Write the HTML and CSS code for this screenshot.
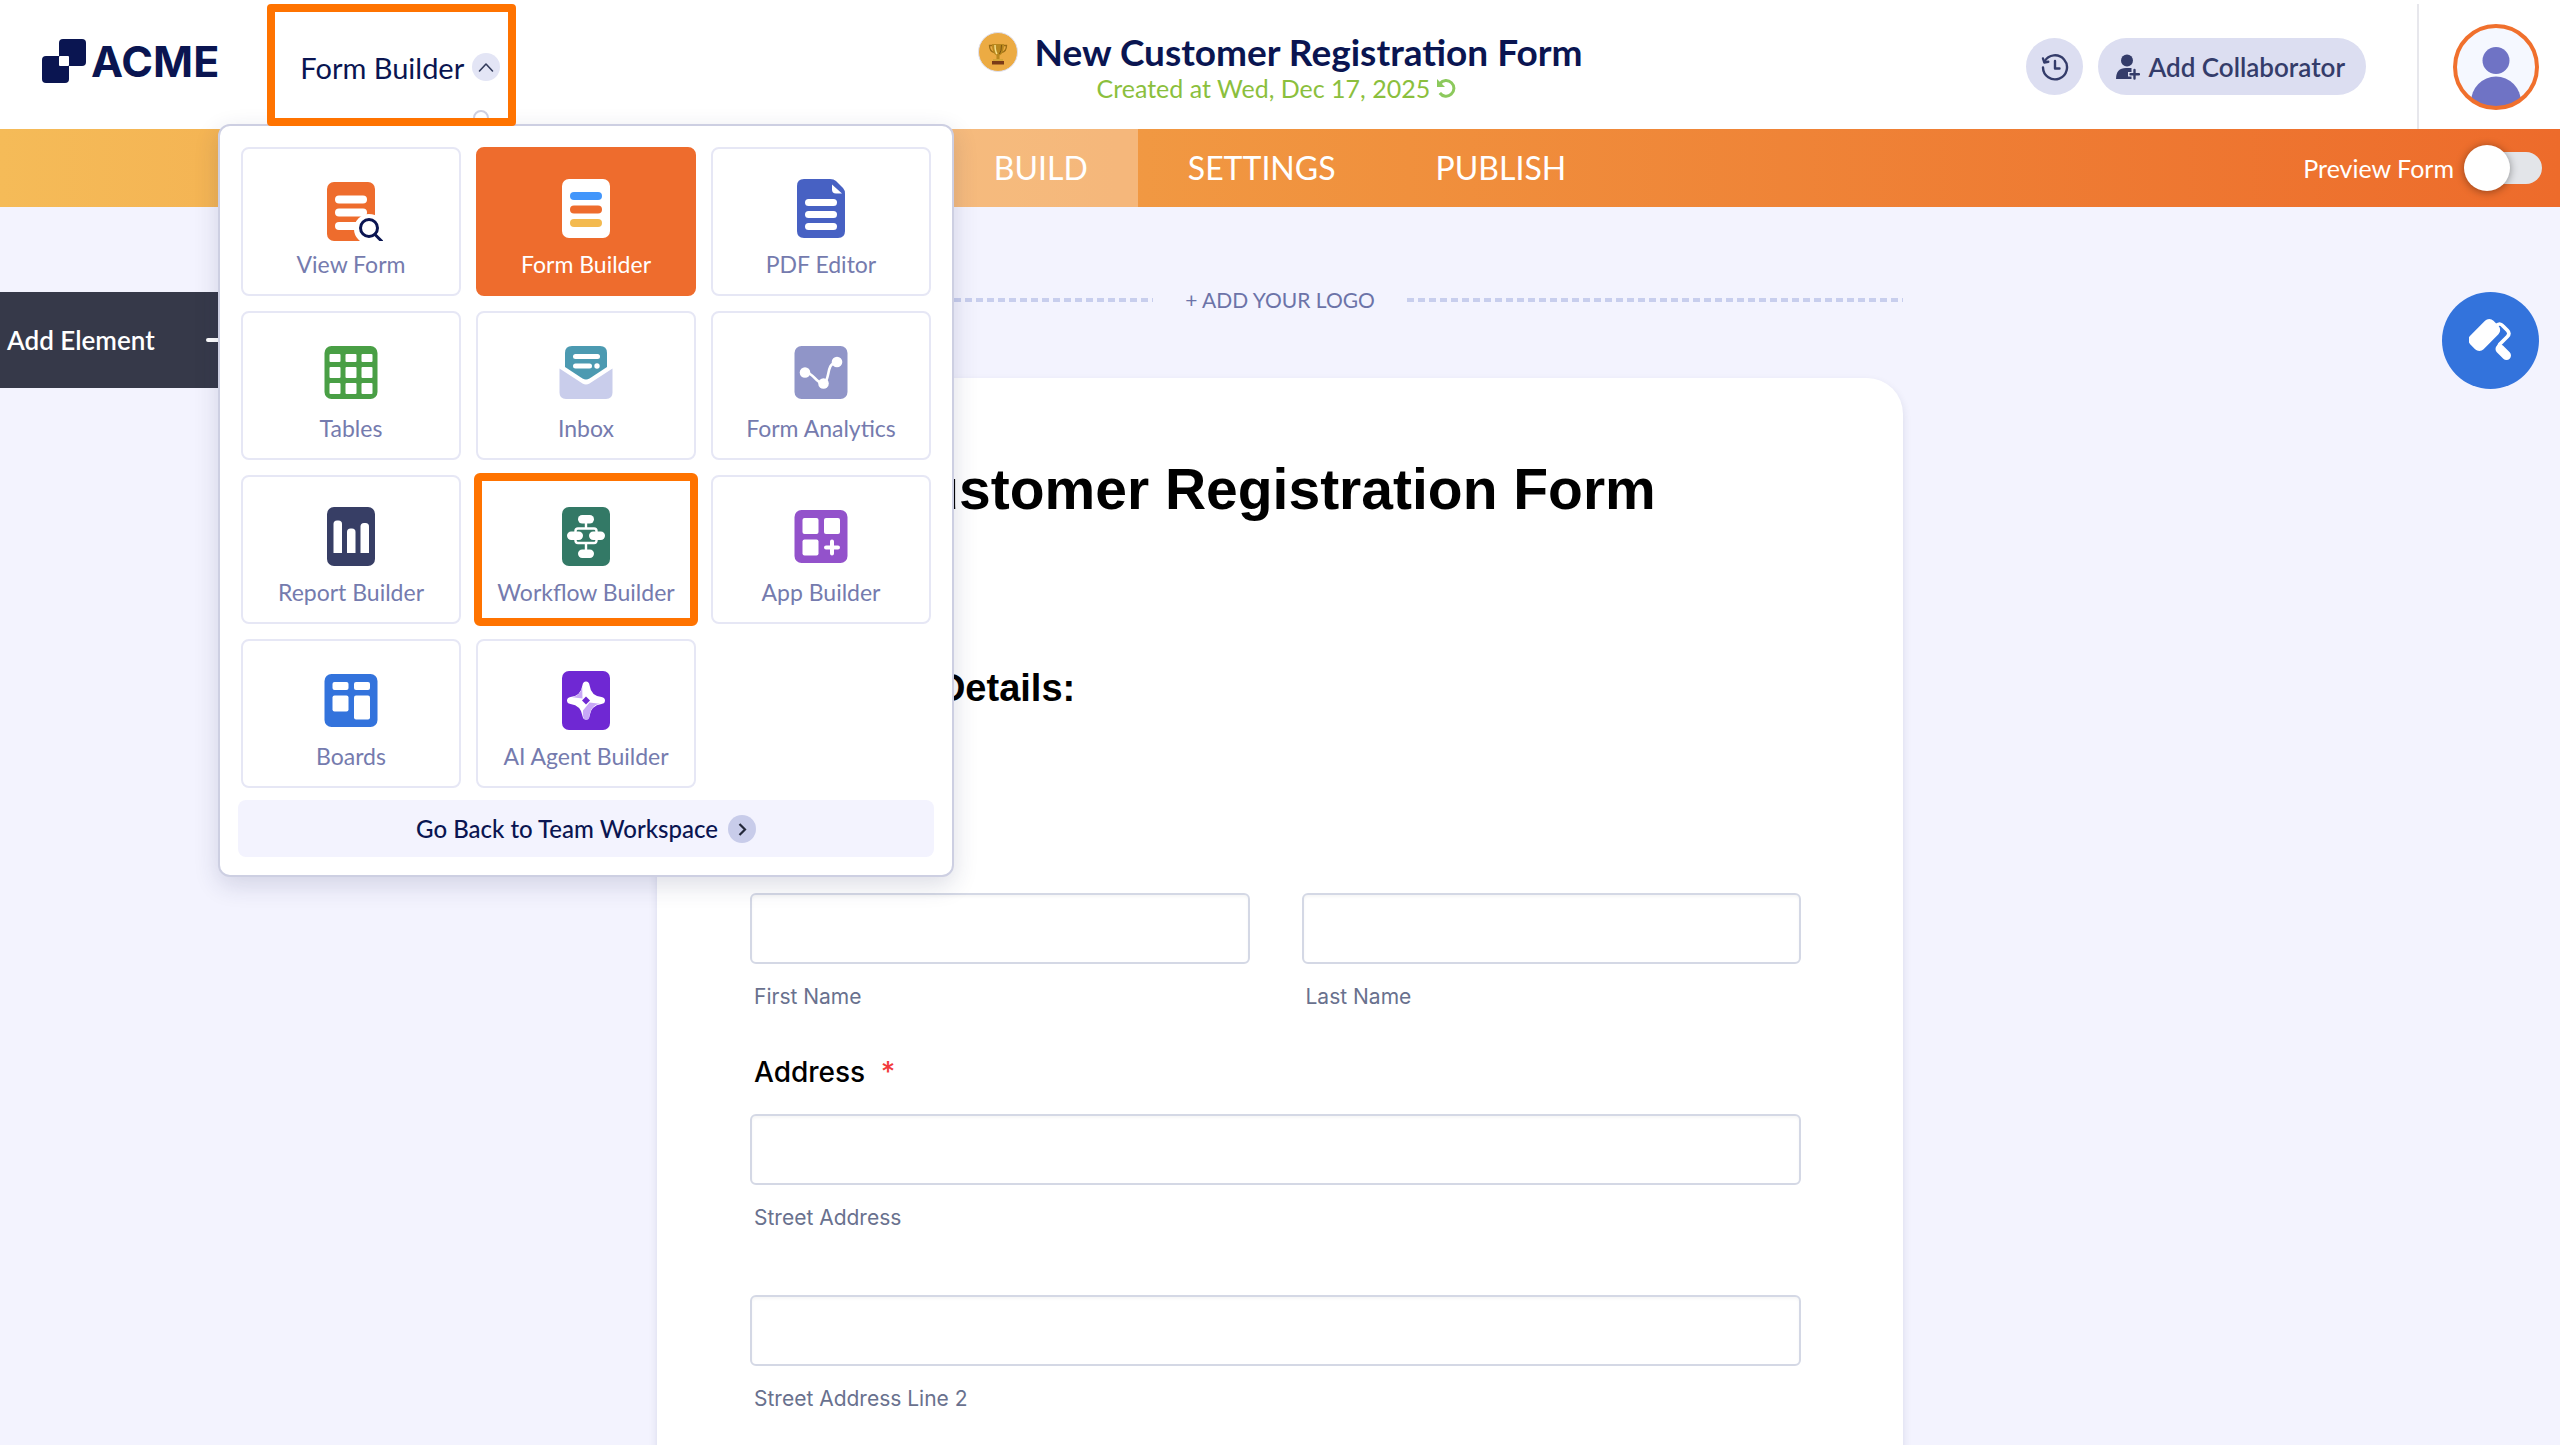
FILE: index.html
```html
<!DOCTYPE html>
<html lang="en">
<head>
<meta charset="UTF-8">
<meta name="viewport" content="width=device-width, initial-scale=1.0">
<title>New Customer Registration Form - Form Builder</title>
<link rel="stylesheet" href="styles.css">
</head>
<body>

  <header class="header">
    <div class="header-left">
      <a href="#" class="logo">
        <svg width="44" height="44" viewBox="0 0 44 44" aria-hidden="true">
          <rect x="17" y="0" width="27" height="27" rx="4" fill="#0a1551"/>
          <rect x="0" y="17" width="27" height="27" rx="4" fill="#0a1551"/>
          <rect x="17" y="17" width="10" height="10" rx="1" fill="#fff"/>
        </svg>
        <span>ACME</span>
      </a>
      <button type="button" class="app-switch">
        Form Builder
        <svg width="28" height="28" viewBox="0 0 28 28" aria-hidden="true">
          <circle cx="14" cy="14" r="14" fill="#e3e5f5"/>
          <path d="M7.500 18L14 11L20.500 18" fill="none" stroke="#343c5c" stroke-width="1.600" stroke-linecap="round" stroke-linejoin="round"/>
        </svg>
      </button>
    </div>

    <div class="form-info">
      <svg class="trophy" width="40" height="40" viewBox="0 0 40 40" aria-hidden="true">
        <circle cx="20" cy="20" r="19.500" fill="#ecab43" stroke="#dfe0ef"/>
        <path d="M14 13.500h-2.500q0 6 5 7M26 13.500h2.500q0 6-5 7" fill="none" stroke="#9a6c14" stroke-width="1.300"/>
        <path d="M14 12h12q0 9.500-4.500 11.500v3.500h-3v-3.500q-4.500-2-4.500-11.500z" fill="#b8871d"/>
        <path d="M17 13q0 6 2 9" fill="none" stroke="#f7e08a" stroke-width="1.500"/>
        <path d="M23.500 13q0 6-2 9" fill="none" stroke="#7d5510" stroke-width="1"/>
        <rect x="15" y="27" width="10" height="2" fill="#d4a537"/>
        <rect x="14" y="29" width="12" height="3.500" fill="#7a3a17"/>
      </svg>
      <div class="form-title">
        <h1>New Customer Registration Form</h1>
        <p>
          Created at Wed, Dec 17, 2025
          <svg width="20" height="20" viewBox="0 0 20 20" aria-hidden="true">
            <path d="M4 5.500A7.800 7.800 0 1 1 3.800 15" fill="none" stroke="#8cc95c" stroke-width="3"/>
            <path d="M1 1v8h8z" fill="#8cc95c"/>
          </svg>
        </p>
      </div>
    </div>

    <div class="header-right">
      <button type="button" class="history" aria-label="Revision history">
        <svg width="28" height="28" viewBox="0 0 28 28" fill="none" stroke="#343c6a" stroke-width="2.400" stroke-linecap="round" stroke-linejoin="round" aria-hidden="true">
          <path d="M3.500 8.500A12 12 0 1 1 2 14.500"/>
          <path d="M2 5.500l1.300 4 4-.7"/>
          <path d="M14 8v7.500h4.500"/>
        </svg>
      </button>
      <button type="button" class="collab">
        <svg width="24" height="26" viewBox="0 0 24 26" aria-hidden="true">
          <circle cx="11" cy="6.500" r="6" fill="#343c6a"/>
          <path d="M0 25q0-11 10-11h5.500v4h-3.500v4.500h3.500v2.500z" fill="#343c6a"/>
          <path d="M18.500 16v8.500M14.500 20.200h8.500" stroke="#343c6a" stroke-width="2.400" stroke-linecap="round"/>
        </svg>
        Add Collaborator
      </button>
      <a href="#" class="account" aria-label="My account">
        <svg width="86" height="86" viewBox="0 0 86 86" aria-hidden="true">
          <defs><clipPath id="avatar"><circle cx="43" cy="43" r="40"/></clipPath></defs>
          <circle cx="43" cy="43" r="41" fill="#f5f8ff"/>
          <g fill="#6f73c5" clip-path="url(#avatar)">
            <circle cx="43" cy="36.500" r="13.500"/>
            <ellipse cx="43" cy="78" rx="25" ry="25.500"/>
          </g>
          <circle cx="43" cy="43" r="41" fill="none" stroke="#f0702d" stroke-width="4"/>
        </svg>
      </a>
    </div>

    <div class="menu">
      <div class="menu-grid">
        <a href="#" class="card">
          <svg width="64" height="64" viewBox="0 0 64 64">
            <rect x="8" y="5" width="48" height="59" rx="7" fill="#ee6c2d"/>
            <rect x="16" y="18.500" width="32" height="8" rx="4" fill="#fff"/>
            <rect x="16" y="31.500" width="32" height="8" rx="4" fill="#fff"/>
            <rect x="16" y="45" width="32" height="8" rx="4" fill="#fff"/>
            <circle cx="50" cy="52" r="15" fill="#fff"/>
            <rect x="50" y="58" width="14" height="6" fill="#fff"/>
            <circle cx="50" cy="51" r="8.500" fill="#fff" stroke="#0a1551" stroke-width="3"/>
            <path d="M56 57.500L62.500 64" stroke="#0a1551" stroke-width="3" stroke-linecap="round"/>
          </svg>
          <span>View Form</span>
        </a>
        <a href="#" class="card active">
          <svg width="64" height="64" viewBox="0 0 64 64">
            <rect x="8" y="2" width="48" height="59" rx="7" fill="#fff"/>
            <rect x="16" y="15" width="32" height="8" rx="4" fill="#4296fb"/>
            <rect x="16" y="28.500" width="32" height="8" rx="4" fill="#ee6c2d"/>
            <rect x="16" y="42" width="32" height="8" rx="4" fill="#f3ba4f"/>
          </svg>
          <span>Form Builder</span>
        </a>
        <a href="#" class="card">
          <svg width="64" height="64" viewBox="0 0 64 64">
            <path d="M15 2h26q4 0 6 2l7 7q2 2 2 6v37q0 7-7 7h-34q-7 0-7-7v-45q0-7 7-7z" fill="#4761c3"/>
            <path d="M43 7.500l10 9h-6q-4 0-4-4z" fill="#fff"/>
            <rect x="16" y="22" width="32" height="7" rx="3.500" fill="#fff"/>
            <rect x="16" y="34" width="32" height="7" rx="3.500" fill="#fff"/>
            <rect x="16" y="46" width="32" height="7" rx="3.500" fill="#fff"/>
          </svg>
          <span>PDF Editor</span>
        </a>
        <a href="#" class="card">
          <svg width="64" height="64" viewBox="0 0 64 64">
            <rect x="5.500" y="5" width="53" height="53" rx="7" fill="#499f45"/>
            <g fill="#fff">
              <rect x="10.500" y="13" width="11" height="8" rx="1"/><rect x="26.500" y="13" width="11" height="8" rx="1"/><rect x="42.500" y="13" width="11" height="8" rx="1"/>
              <rect x="10.500" y="26" width="11" height="11" rx="1"/><rect x="26.500" y="26" width="11" height="11" rx="1"/><rect x="42.500" y="26" width="11" height="11" rx="1"/>
              <rect x="10.500" y="42" width="11" height="11" rx="1"/><rect x="26.500" y="42" width="11" height="11" rx="1"/><rect x="42.500" y="42" width="11" height="11" rx="1"/>
            </g>
          </svg>
          <span>Tables</span>
        </a>
        <a href="#" class="card">
          <svg width="64" height="64" viewBox="0 0 64 64">
            <path d="M5.500 27.500l23 15q3.500 2 7 0l23-15v24q0 6.500-6.500 6.500h-40q-6.500 0-6.500-6.500z" fill="#c9cdeb"/>
            <path d="M11 26v-14q0-7 7-7h28q7 0 7 7v14l-17.500 11.500q-3.500 2-7 0z" fill="#4c9ab1"/>
            <rect x="19" y="13" width="27" height="5" rx="2.500" fill="#fff"/>
            <rect x="19" y="22.500" width="19" height="5" rx="2.500" fill="#fff"/>
            <circle cx="43" cy="25" r="2.700" fill="#fff"/>
          </svg>
          <span>Inbox</span>
        </a>
        <a href="#" class="card">
          <svg width="64" height="64" viewBox="0 0 64 64">
            <rect x="5.500" y="5" width="53" height="53" rx="7" fill="#9095c8"/>
            <path d="M16 31.500c9 0 10 10 18.500 11.500c7-4 2-20 13-22" fill="none" stroke="#fff" stroke-width="2.600"/>
            <circle cx="16" cy="31.500" r="5.300" fill="#fff"/>
            <circle cx="34.500" cy="42.500" r="5.300" fill="#fff"/>
            <circle cx="48" cy="21" r="5.300" fill="#fff"/>
          </svg>
          <span>Form Analytics</span>
        </a>
        <a href="#" class="card">
          <svg width="64" height="64" viewBox="0 0 64 64">
            <rect x="8" y="2" width="48" height="59" rx="7" fill="#373e65"/>
            <g fill="#fff">
              <path d="M14.500 48v-29q0-3.500 3.500-3.500h1.500q3.500 0 3.500 3.500v29z"/>
              <path d="M28 48v-21q0-3.500 3.500-3.500h1.500q3.500 0 3.500 3.500v21z"/>
              <path d="M41.500 48v-26.500q0-3.500 3.500-3.500h1.500q3.500 0 3.500 3.500v26.500z"/>
            </g>
          </svg>
          <span>Report Builder</span>
        </a>
        <a href="#" class="card marked">
          <svg width="64" height="64" viewBox="0 0 64 64">
            <rect x="8" y="2" width="48" height="59" rx="7" fill="#337966"/>
            <g fill="none" stroke="#fff" stroke-width="2.400">
              <rect x="21.500" y="23.500" width="21" height="14.500" rx="2.500"/>
              <path d="M32 16v8M32 38v8"/>
            </g>
            <g fill="#fff">
              <rect x="24" y="10" width="16" height="8.500" rx="4.200"/>
              <rect x="24" y="44.500" width="16" height="8.500" rx="4.200"/>
              <rect x="13" y="26.500" width="16" height="8.500" rx="4.200"/>
              <rect x="35" y="26.500" width="16" height="8.500" rx="4.200"/>
            </g>
          </svg>
          <span>Workflow Builder</span>
        </a>
        <a href="#" class="card">
          <svg width="64" height="64" viewBox="0 0 64 64">
            <rect x="5.500" y="5" width="53" height="53" rx="7" fill="#9352cb"/>
            <g fill="#fff">
              <rect x="13.500" y="13" width="16" height="16" rx="2"/>
              <rect x="35" y="13" width="16" height="16" rx="2"/>
              <rect x="13.500" y="34.500" width="16" height="16" rx="2"/>
            </g>
            <path d="M43 36.500v12M37 42.500h12" stroke="#fff" stroke-width="4" stroke-linecap="round"/>
          </svg>
          <span>App Builder</span>
        </a>
        <a href="#" class="card">
          <svg width="64" height="64" viewBox="0 0 64 64">
            <rect x="5.500" y="5" width="53" height="53" rx="7" fill="#3373dc"/>
            <g fill="#fff">
              <rect x="13.500" y="13" width="16" height="8" rx="2"/>
              <rect x="35" y="13" width="16" height="8" rx="2"/>
              <rect x="13.500" y="26.500" width="16" height="16" rx="2"/>
              <rect x="35" y="26.500" width="16" height="24" rx="2"/>
            </g>
          </svg>
          <span>Boards</span>
        </a>
        <a href="#" class="card">
          <svg width="64" height="64" viewBox="0 0 64 64">
            <rect x="8" y="2" width="48" height="59" rx="7" fill="#6f28d3"/>
            <path d="M32 12.500q3 0 3.500 3.500q1.500 11 12 12q3.500.500 3.500 3.500t-3.500 3.500q-10.500 1.500-12 12q-.500 3.500-3.500 3.500t-3.500-3.500q-1.500-10.500-12-12q-3.500-.500-3.500-3.500t3.500-3.500q10.500-1 12-12q.500-3.500 3.500-3.500z" fill="#fff"/>
            <path d="M28.200 18q-2 9-10 10.200l10.300 1.300zM35.800 45q2-9 10-10.200l-10.300-1.300l-6.500 8q-1 9 3 9.500q3 0 3.500-3.500z" fill="#c8a7f7"/>
            <path d="M32 27.500l4 4l-4 4l-4-4z" fill="#6f28d3"/>
          </svg>
          <span>AI Agent Builder</span>
        </a>
      </div>
      <a href="#" class="menu-back">
        Go Back to Team Workspace
        <svg width="28" height="28" viewBox="0 0 28 28" aria-hidden="true">
          <circle cx="14" cy="14" r="14" fill="#c8ccea"/>
          <path d="M11.500 9l5.500 5.500l-5.500 5.500" fill="none" stroke="#23283a" stroke-width="2.200"/>
        </svg>
      </a>
    </div>
  </header>

  <nav class="tabs">
    <ul>
      <li><a href="#" class="active">BUILD</a></li>
      <li><a href="#">SETTINGS</a></li>
      <li><a href="#">PUBLISH</a></li>
    </ul>
    <div class="preview">
      <label for="preview">Preview Form</label>
      <input type="checkbox" id="preview" class="toggle">
    </div>
  </nav>

  <main class="canvas">
    <button type="button" class="add-element">
      Add Element
      <svg width="30" height="30" viewBox="0 0 30 30" aria-hidden="true">
        <path d="M2 15h26M15 2v26" stroke="#fff" stroke-width="4" stroke-linecap="round"/>
      </svg>
    </button>

    <div class="builder">
      <button type="button" class="add-logo"><span>+ ADD YOUR LOGO</span></button>

      <form class="form">
        <h2>New Customer Registration Form</h2>
        <h3>Customer Details:</h3>

        <fieldset class="question">
          <legend>Name <span class="required">*</span></legend>
          <div class="row">
            <div class="field">
              <input type="text" id="first-name">
              <label for="first-name">First Name</label>
            </div>
            <div class="field">
              <input type="text" id="last-name">
              <label for="last-name">Last Name</label>
            </div>
          </div>
        </fieldset>

        <fieldset class="question">
          <legend>Address <span class="required">*</span></legend>
          <div class="stack">
            <div class="field">
              <input type="text" id="street">
              <label for="street">Street Address</label>
            </div>
            <div class="field">
              <input type="text" id="street-2">
              <label for="street-2">Street Address Line 2</label>
            </div>
          </div>
        </fieldset>
      </form>
    </div>

    <button type="button" class="designer" aria-label="Form Designer">
      <svg width="44" height="44" viewBox="0 0 44 44" aria-hidden="true">
        <rect x="-1" y="6" width="33" height="19" rx="6" transform="rotate(-45 16 16)" fill="#fff"/>
        <path d="M27 7q3.500-4 7 0l4.500 4.500q3 3 0 6l-8 8q-1.500 2-1 5" fill="none" stroke="#fff" stroke-width="3.600" stroke-linecap="round"/>
        <path d="M31 30l6.500 6.500" stroke="#fff" stroke-width="9" stroke-linecap="round"/>
      </svg>
    </button>
  </main>

</body>
</html>
```

FILE: styles.css
```css
* {
  box-sizing: border-box;
}
body {
  font-family: Lato, "Liberation Sans", sans-serif;
  display: flex;
  flex-direction: column;
  background-color: #f3f3fe;
  color: #0a1551;
  margin: 0;
  min-height: 100vh;
}
a {
  color: inherit;
  text-decoration: none;
}
button {
  font-family: inherit;
  color: inherit;
  border: none;
  padding: 0;
  cursor: pointer;
}

/* Header */
.header {
  position: relative;
  display: grid;
  grid-template-columns: 1fr auto 1fr;
  height: 129px;
  background-color: #fff;
}
.header-left {
  display: flex;
  align-items: flex-start;
  gap: 48px;
  padding: 4px 0 0 42px;
}
.logo {
  display: flex;
  align-items: center;
  gap: 5px;
  height: 114px;
  font-family: Inter, sans-serif;
  font-size: 43px;
  font-weight: 700;
}
.app-switch {
  position: relative;
  z-index: 3;
  display: flex;
  align-items: center;
  justify-content: space-between;
  width: 249px;
  height: 122px;
  padding: 4px 8px 0 25px;
  border: 8px solid #ff7300;
  border-radius: 4px;
  background-color: #fff;
  font-size: 29px;
  overflow: hidden;
}
/* tip of the menu arrow */
.app-switch::after {
  content: "";
  position: absolute;
  right: 19px;
  bottom: -8px;
  width: 12px;
  height: 12px;
  border: 2px solid #cdcfe2;
  border-radius: 50%;
}
.form-info {
  display: flex;
  align-items: flex-start;
  gap: 17px;
  padding-top: 32px;
}
.form-title {
  display: flex;
  flex-direction: column;
}
.form-title h1 {
  margin: 0;
  font-size: 37px;
  font-weight: 700;
  line-height: 40px;
}
.form-title p {
  display: flex;
  align-items: center;
  gap: 6px;
  margin: 0 0 0 62px;
  color: #8bbf3d;
  font-size: 25px;
  line-height: 32px;
}
.header-right {
  display: flex;
  align-items: center;
  justify-content: flex-end;
  padding-top: 4px;
}
.history,
.collab {
  display: flex;
  align-items: center;
  justify-content: center;
  height: 57px;
  border-radius: 29px;
  background-color: #dcdef1;
  color: #343c6a;
}
.history {
  width: 57px;
  margin-right: 15px;
}
.collab {
  gap: 8px;
  padding: 0 21px 0 18px;
  margin-right: 51px;
  font-size: 26px;
  font-weight: 600;
}
.account {
  display: flex;
  align-items: center;
  align-self: stretch;
  padding: 0 21px 0 34px;
  border-left: 2px solid #e7e7ec;
}

/* Product menu */
.menu {
  position: absolute;
  z-index: 2;
  top: 124px;
  left: 218px;
  width: 736px;
  padding: 21px 18px 18px;
  border: 2px solid #cdcfe2;
  border-radius: 12px;
  background-color: #fff;
  box-shadow: 0 8px 24px rgba(37, 45, 91, 0.16);
}
.menu-grid {
  display: grid;
  grid-template-columns: repeat(3, 1fr);
  gap: 15px;
  padding: 0 3px;
}
.card {
  display: flex;
  flex-direction: column;
  align-items: center;
  gap: 9px;
  height: 149px;
  padding-top: 28px;
  border: 2px solid #e6e7f5;
  border-radius: 8px;
  color: #757bae;
  font-size: 23px;
  line-height: 28px;
}
.card.active {
  border-color: #ee6c2d;
  background-color: #ee6c2d;
  color: #fff;
}
.card.marked {
  border-radius: 4px;
  outline: 8px solid #ff7300;
  outline-offset: -6px;
}
.menu-back {
  display: flex;
  align-items: center;
  justify-content: center;
  gap: 10px;
  height: 57px;
  margin-top: 12px;
  border-radius: 8px;
  background-color: #f3f3fe;
  font-size: 24px;
  font-weight: 500;
}

/* Tabs */
.tabs {
  display: grid;
  grid-template-columns: 1fr auto 1fr;
  height: 78px;
  background: linear-gradient(90deg, #f5bb58, #f0903d 55%, #ed6b2b);
  color: #fff;
}
.tabs ul {
  grid-column: 2;
  display: flex;
  margin: 0;
  padding: 0;
  list-style: none;
}
.tabs li a {
  display: flex;
  align-items: center;
  height: 78px;
  padding: 0 50px 2px;
  font-size: 32px;
}
.tabs li a.active {
  background-color: rgba(255, 255, 255, 0.3);
}
.preview {
  display: flex;
  align-items: center;
  justify-content: flex-end;
  gap: 14px;
  padding-right: 18px;
  font-size: 25px;
}
.toggle {
  appearance: none;
  display: flex;
  align-items: center;
  width: 74px;
  height: 32px;
  margin: 0;
  border-radius: 16px;
  background-color: #e3e5e9;
}
.toggle::before {
  content: "";
  flex: none;
  width: 46px;
  height: 46px;
  margin-left: -4px;
  border-radius: 50%;
  background-color: #fff;
  box-shadow: 0 1px 8px rgba(0, 0, 0, 0.4);
}

/* Canvas */
.canvas {
  flex: 1;
  display: grid;
  grid-template-columns: 1fr minmax(0, 1246px) 1fr;
  align-items: start;
}
.add-element {
  justify-self: start;
  display: flex;
  align-items: center;
  gap: 51px;
  height: 96px;
  margin-top: 85px;
  padding: 0 16px 0 7px;
  background-color: #363949;
  color: #fff;
  font-size: 26px;
  font-weight: 600;
}
.builder {
  align-self: stretch;
  display: flex;
  flex-direction: column;
  gap: 64px;
  padding-top: 79px;
}
.add-logo {
  display: flex;
  align-items: center;
  gap: 32px;
  background: none;
  color: #6c73a8;
  font-size: 21px;
  line-height: 28px;
}
.add-logo::before,
.add-logo::after {
  content: "";
  flex: 1;
  height: 4px;
  background: repeating-linear-gradient(90deg, #c8ceed 0 7px, transparent 7px 11px);
}
.form {
  flex: 1;
  padding: 78px 102px 0 93px;
  border-radius: 36px 36px 0 0;
  background-color: #fff;
  box-shadow: 0 4px 8px rgba(37, 45, 91, 0.12);
  font-family: Inter, sans-serif;
}
.form h2,
.form h3 {
  margin: 0;
  color: #000;
  font-family: "Liberation Sans", Arial, sans-serif;
}
.form h2 {
  font-size: 57px;
  line-height: 66px;
}
.form h3 {
  margin: 144px 0 123px;
  font-size: 38px;
  line-height: 44px;
}
.question {
  min-width: 0;
  margin: 0 0 44px;
  padding: 0;
  border: none;
}
.question legend {
  margin-bottom: 24px;
  padding: 0 4px;
  color: #000;
  font-size: 28px;
  font-weight: 500;
  line-height: 36px;
}
.required {
  margin-left: 8px;
  color: #f23a3c;
}
.row {
  display: grid;
  grid-template-columns: 1fr 1fr;
  gap: 52px;
}
.stack {
  display: flex;
  flex-direction: column;
  gap: 64px;
}
.field {
  display: flex;
  flex-direction: column;
  gap: 20px;
}
.field input {
  width: 100%;
  height: 71px;
  padding: 0 16px;
  border: 2px solid #d4d8e5;
  border-radius: 6px;
  background-color: #fff;
  box-shadow: inset 0 2px 3px rgba(0, 0, 0, 0.04);
  font-size: 24px;
}
.field label {
  padding: 0 4px;
  color: #69718e;
  font-size: 21px;
  line-height: 26px;
}
.designer {
  justify-self: end;
  display: flex;
  align-items: center;
  justify-content: center;
  width: 97px;
  height: 97px;
  margin: 85px 21px 0 0;
  border-radius: 50%;
  background-color: #3373dc;
}
```
